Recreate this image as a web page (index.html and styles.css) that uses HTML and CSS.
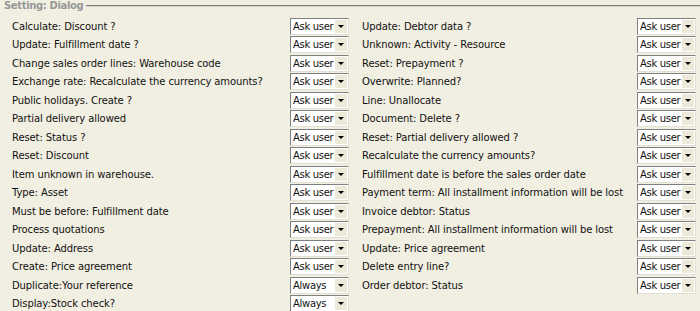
FILE: index.html
```html
<!DOCTYPE html>
<html lang="en">
  <head>
    <meta charset="UTF-8" />
    <title>Setting: Dialog</title>
    <link rel="stylesheet" href="styles.css">
  </head>
  <body>
    <fieldset class="settings">
      <legend>Setting: Dialog</legend>
      <div class="grid">
        <span class="label">Calculate: Discount ?</span>
        <div class="combo"><span class="value">Ask user</span><span class="arrow"></span></div>
        <span class="label">Update: Debtor data ?</span>
        <div class="combo"><span class="value">Ask user</span><span class="arrow"></span></div>

        <span class="label">Update: Fulfillment date ?</span>
        <div class="combo"><span class="value">Ask user</span><span class="arrow"></span></div>
        <span class="label">Unknown: Activity - Resource</span>
        <div class="combo"><span class="value">Ask user</span><span class="arrow"></span></div>

        <span class="label">Change sales order lines: Warehouse code</span>
        <div class="combo"><span class="value">Ask user</span><span class="arrow"></span></div>
        <span class="label">Reset: Prepayment ?</span>
        <div class="combo"><span class="value">Ask user</span><span class="arrow"></span></div>

        <span class="label">Exchange rate: Recalculate the currency amounts?</span>
        <div class="combo"><span class="value">Ask user</span><span class="arrow"></span></div>
        <span class="label">Overwrite: Planned?</span>
        <div class="combo"><span class="value">Ask user</span><span class="arrow"></span></div>

        <span class="label">Public holidays. Create ?</span>
        <div class="combo"><span class="value">Ask user</span><span class="arrow"></span></div>
        <span class="label">Line: Unallocate</span>
        <div class="combo"><span class="value">Ask user</span><span class="arrow"></span></div>

        <span class="label">Partial delivery allowed</span>
        <div class="combo"><span class="value">Ask user</span><span class="arrow"></span></div>
        <span class="label">Document: Delete ?</span>
        <div class="combo"><span class="value">Ask user</span><span class="arrow"></span></div>

        <span class="label">Reset: Status ?</span>
        <div class="combo"><span class="value">Ask user</span><span class="arrow"></span></div>
        <span class="label">Reset: Partial delivery allowed ?</span>
        <div class="combo"><span class="value">Ask user</span><span class="arrow"></span></div>

        <span class="label">Reset: Discount</span>
        <div class="combo"><span class="value">Ask user</span><span class="arrow"></span></div>
        <span class="label">Recalculate the currency amounts?</span>
        <div class="combo"><span class="value">Ask user</span><span class="arrow"></span></div>

        <span class="label">Item unknown in warehouse.</span>
        <div class="combo"><span class="value">Ask user</span><span class="arrow"></span></div>
        <span class="label">Fulfillment date is before the sales order date</span>
        <div class="combo"><span class="value">Ask user</span><span class="arrow"></span></div>

        <span class="label">Type: Asset</span>
        <div class="combo"><span class="value">Ask user</span><span class="arrow"></span></div>
        <span class="label">Payment term: All installment information will be lost</span>
        <div class="combo"><span class="value">Ask user</span><span class="arrow"></span></div>

        <span class="label">Must be before: Fulfillment date</span>
        <div class="combo"><span class="value">Ask user</span><span class="arrow"></span></div>
        <span class="label">Invoice debtor: Status</span>
        <div class="combo"><span class="value">Ask user</span><span class="arrow"></span></div>

        <span class="label">Process quotations</span>
        <div class="combo"><span class="value">Ask user</span><span class="arrow"></span></div>
        <span class="label">Prepayment: All installment information will be lost</span>
        <div class="combo"><span class="value">Ask user</span><span class="arrow"></span></div>

        <span class="label">Update: Address</span>
        <div class="combo"><span class="value">Ask user</span><span class="arrow"></span></div>
        <span class="label">Update: Price agreement</span>
        <div class="combo"><span class="value">Ask user</span><span class="arrow"></span></div>

        <span class="label">Create: Price agreement</span>
        <div class="combo"><span class="value">Ask user</span><span class="arrow"></span></div>
        <span class="label">Delete entry line?</span>
        <div class="combo"><span class="value">Ask user</span><span class="arrow"></span></div>

        <span class="label">Duplicate:Your reference</span>
        <div class="combo"><span class="value">Always</span><span class="arrow"></span></div>
        <span class="label">Order debtor: Status</span>
        <div class="combo"><span class="value">Ask user</span><span class="arrow"></span></div>

        <span class="label">Display:Stock check?</span>
        <div class="combo"><span class="value">Always</span><span class="arrow"></span></div>
      </div>
    </fieldset>
  </body>
</html>
```

FILE: styles.css
```css
body {
  margin: 0;
  background-color: #f1efe2;
  font-family: "DejaVu Sans", sans-serif;
  font-size: 10px;
  color: #111;
  overflow: hidden;
}

.settings {
  margin: 0;
  padding: 6px 0 20px 12px;
  width: 720px;
  border: 2px groove #f8f7f0;
  border-top-color: #d4d0c8;
  border-left: none;
  box-sizing: border-box;
}

.settings legend {
  padding: 0 3px 0 4px;
  margin-left: -12px;
  color: #979797;
  font-weight: bold;
  letter-spacing: -0.35px;
}

.grid {
  display: grid;
  grid-template-columns: 278px 72px 275px 60px;
  grid-auto-rows: 18.5px;
  align-items: center;
}

.label {
  white-space: nowrap;
  letter-spacing: -0.1px;
}

.combo {
  display: flex;
  align-items: center;
  width: 59px;
  height: 17px;
  box-sizing: border-box;
  background-color: #fff;
  border: 1px solid;
  border-color: #808080 #e2e0d4 #e2e0d4 #808080;
}

.combo .value {
  flex: 1;
  padding-left: 2px;
  white-space: nowrap;
  overflow: hidden;
  letter-spacing: -0.3px;
}

.arrow {
  width: 12px;
  height: 13px;
  margin-right: 1px;
  background-color: #ece9d8;
  position: relative;
}

.arrow::after {
  content: "";
  position: absolute;
  left: 3px;
  top: 5px;
  border-left: 3px solid transparent;
  border-right: 3px solid transparent;
  border-top: 3px solid #000;
}
```
